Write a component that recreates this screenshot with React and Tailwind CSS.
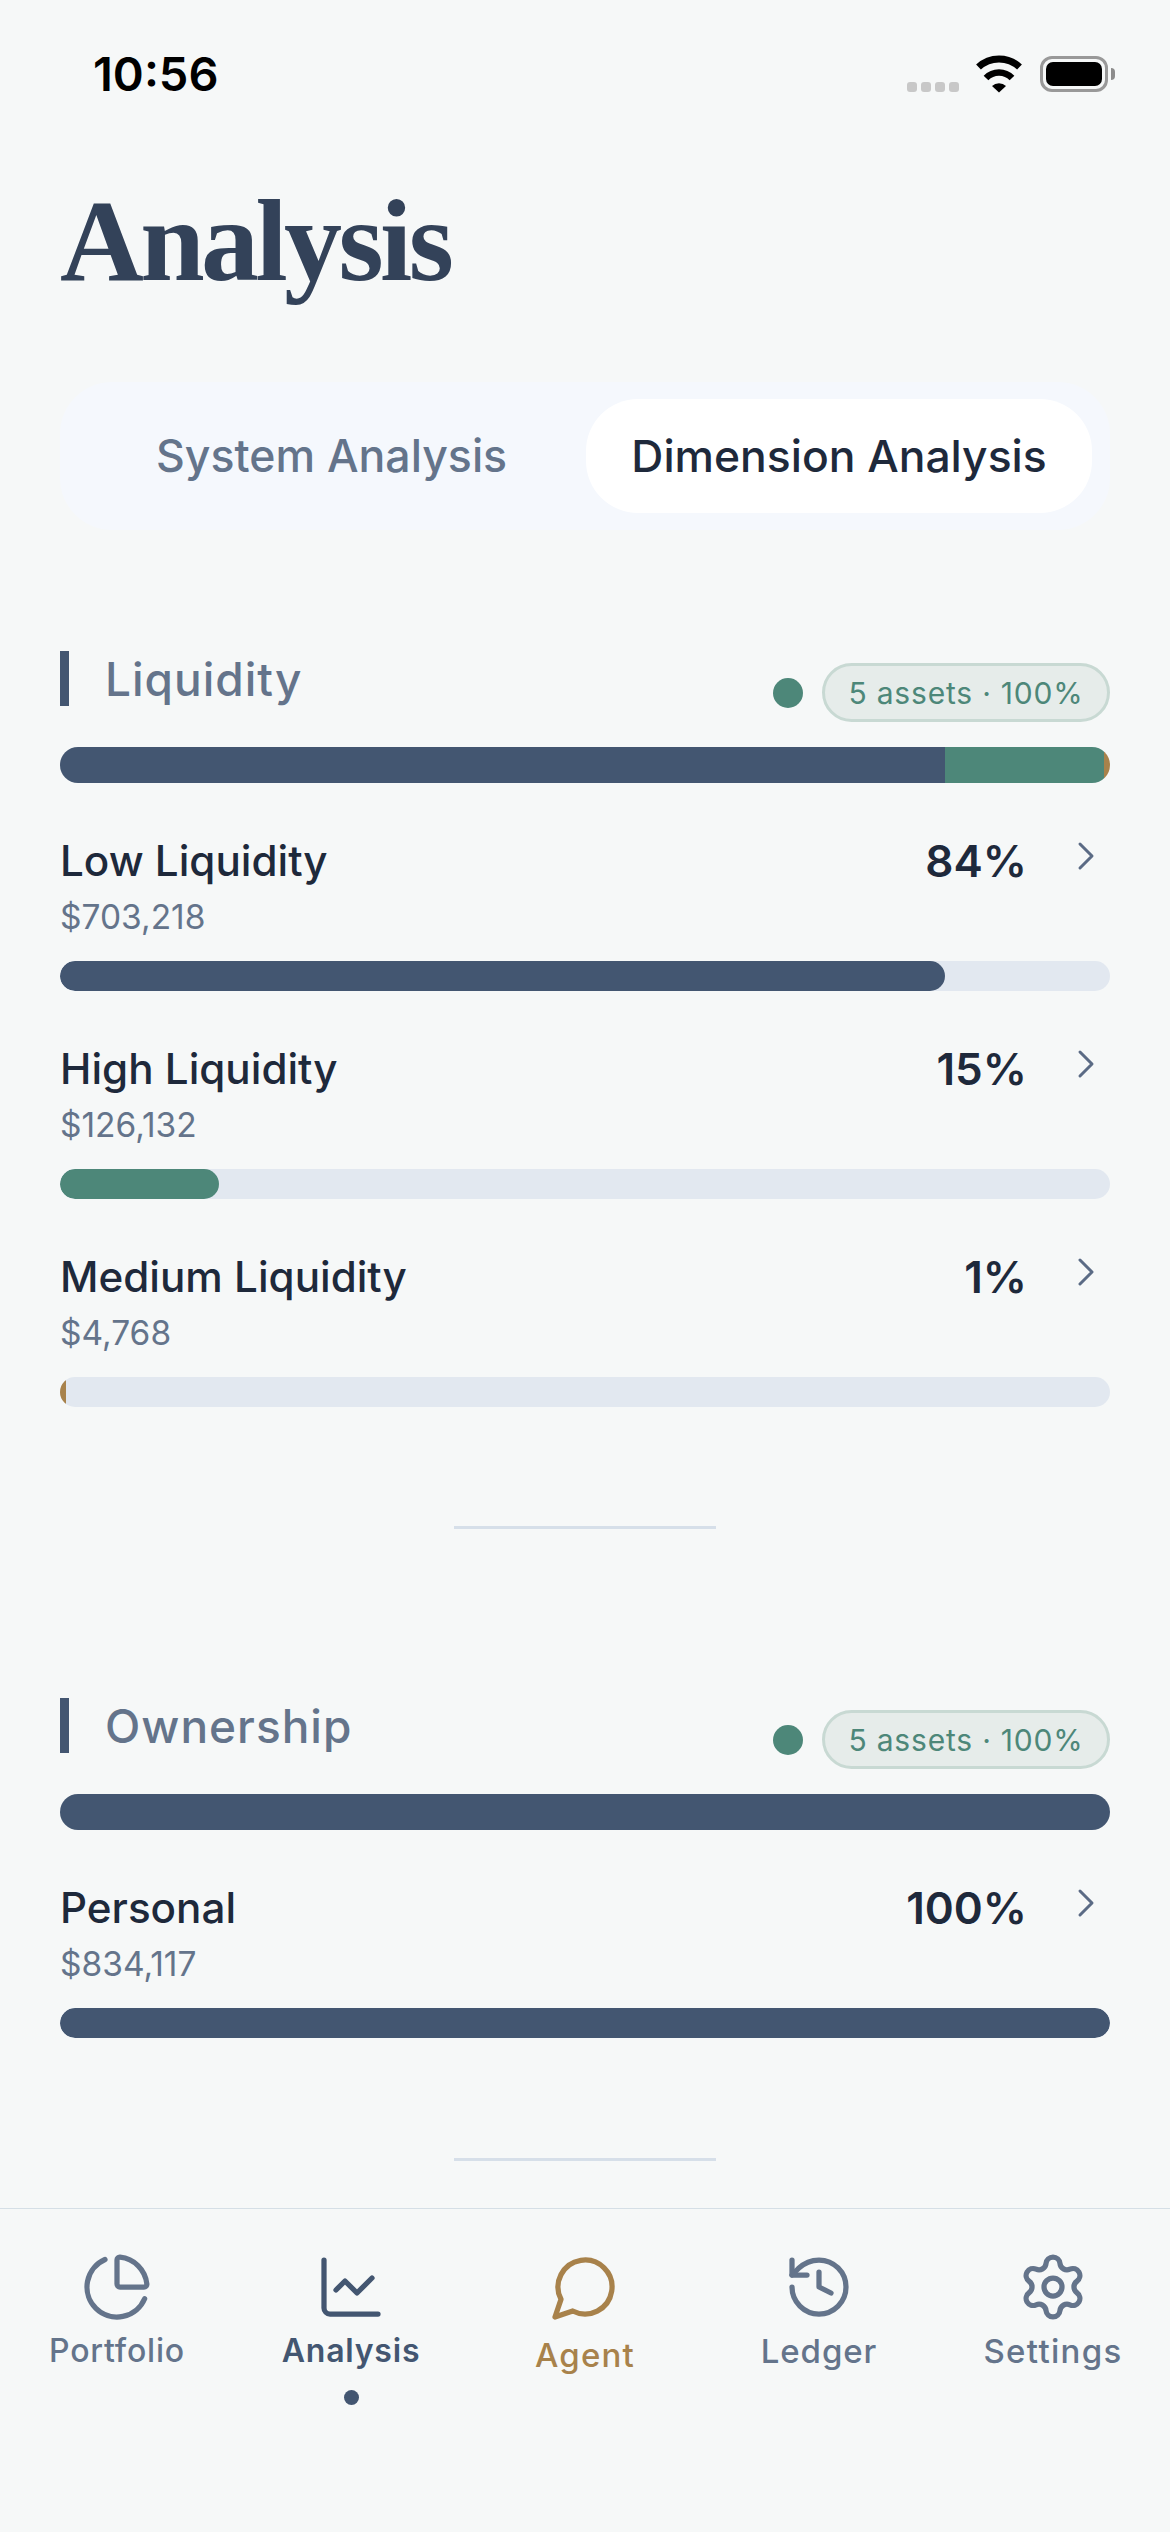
import { ChartPie, ChartLine, History, Settings, ChevronRight } from 'lucide-react';

const sections = [
  {
    title: 'Liquidity',
    stack: [
      { color: 'bg-[#435671]', width: 885 },
      { color: 'bg-[#4d8779]', width: 159 },
      { color: 'bg-[#a8824b]', width: 6 },
    ],
    rows: [
      { name: 'Low Liquidity', pct: '84%', amount: '$703,218', color: 'bg-[#435671]', width: 885, round: true },
      { name: 'High Liquidity', pct: '15%', amount: '$126,132', color: 'bg-[#4d8779]', width: 159, round: true },
      { name: 'Medium Liquidity', pct: '1%', amount: '$4,768', color: 'bg-[#a8824b]', width: 6, round: false },
    ],
    dividerTop: 'mt-[119px]',
  },
  {
    title: 'Ownership',
    stack: [{ color: 'bg-[#435671]', width: 1050 }],
    rows: [{ name: 'Personal', pct: '100%', amount: '$834,117', color: 'bg-[#435671]', width: 1050, round: true }],
    dividerTop: 'mt-[120px]',
  },
];

// lucide's current message-circle has a rounder tail than the one in the picture
const AgentIcon = ({ size, strokeWidth, className }) => (
  <svg
    width={size}
    height={size}
    viewBox="0 0 24 24"
    fill="none"
    stroke="currentColor"
    strokeWidth={strokeWidth}
    strokeLinecap="round"
    strokeLinejoin="round"
    className={className}
  >
    <path d="M7.9 20A9 9 0 1 0 4 16.1L2 22Z" />
  </svg>
);

const navItems = [
  { label: 'Portfolio', Icon: ChartPie, iconColor: 'text-[#64748b]', gap: 'mt-[6px]', text: 'text-[#64748b] text-[32px] font-medium tracking-[0.8px]' },
  { label: 'Analysis', Icon: ChartLine, iconColor: 'text-[#435671]', gap: 'mt-[6px]', text: 'text-[#435671] text-[32px] font-semibold tracking-[0.8px]', active: true },
  { label: 'Agent', Icon: AgentIcon, iconColor: 'text-[#a8824b]', gap: 'mt-[10px]', text: 'text-[#a8824b] text-[33px] font-medium tracking-[1.2px]' },
  { label: 'Ledger', Icon: History, iconColor: 'text-[#64748b]', gap: 'mt-[6px]', text: 'text-[#64748b] text-[33px] font-medium tracking-[0.9px]' },
  { label: 'Settings', Icon: Settings, iconColor: 'text-[#64748b]', gap: 'mt-[6px]', text: 'text-[#64748b] text-[33px] font-medium tracking-[1.3px]' },
];

const StatusBar = () => (
  <div className="h-[110px] relative flex justify-between">
    <span className="ml-[93px] mt-[46px] text-[47px] leading-[56px] font-semibold text-black">10:56</span>
    <div className="flex items-start mr-[55px] mt-[55px]">
      <div className="flex gap-[4px] mt-[27px] mr-[16px]">
        <span className="w-[10px] h-[10px] rounded-[3px] bg-[#c8c8c8]" />
        <span className="w-[10px] h-[10px] rounded-[3px] bg-[#c8c8c8]" />
        <span className="w-[10px] h-[10px] rounded-[3px] bg-[#c8c8c8]" />
        <span className="w-[10px] h-[10px] rounded-[3px] bg-[#c8c8c8]" />
      </div>
      <svg width="48" height="38" viewBox="0 0 48 38" fill="none">
        <path d="M3.5 12 A30 30 0 0 1 44.5 12" stroke="#000" strokeWidth="7" />
        <path d="M11 23 A18 18 0 0 1 37 23" stroke="#000" strokeWidth="6.5" />
        <path d="M17 31 A10 10 0 0 1 31 31 L24 37.5 Z" fill="#000" />
      </svg>
      <div className="ml-[17px] w-[68px] h-[36px] rounded-[12px] border-[3px] border-[#999999] p-[3px] mt-[1px]">
        <div className="w-full h-full rounded-[7px] bg-black" />
      </div>
      <div className="ml-[3px] mt-[13px] w-[4px] h-[12px] rounded-r-[4px] bg-[#8c8c8c]" />
    </div>
  </div>
);

const Tabs = () => (
  <div className="mx-[60px] h-[148px] rounded-[52px] bg-[#f5f8fd] flex items-center pr-[18px] justify-between">
    <span className="ml-[96px] text-[44.6px] font-medium text-[#64748b] leading-[56px]">System Analysis</span>
    <span className="w-[506px] h-[114px] rounded-[52px] bg-white flex items-center justify-center text-[44.4px] font-medium text-[#1e293b]">
      Dimension Analysis
    </span>
  </div>
);

const Row = ({ row }) => (
  <div className="flex flex-col">
    <div className="h-[52px] flex items-center">
      <span className="text-[42.2px] leading-[52px] font-medium text-[#1e293b]">{row.name}</span>
      <span className="ml-auto text-[44px] leading-[52px] font-semibold text-[#1e293b]">{row.pct}</span>
      <ChevronRight size={48} strokeWidth={1.5} className="ml-[35px] -mt-[10px] text-[#5b6b85]" />
    </div>
    <div className="mt-[8px] h-[44px] text-[33.5px] leading-[44px] text-[#64748b]">{row.amount}</div>
    <div className="mt-[22px] h-[30px] rounded-full bg-[#e2e8f0] overflow-hidden">
      <div className={`h-full ${row.color} ${row.round ? 'rounded-full' : ''}`} style={{ width: row.width }} />
    </div>
  </div>
);

const Section = ({ section }) => (
  <section className="px-[60px]">
    <div className="h-[72px] flex items-start">
      <div className="w-[9px] h-[55px] bg-[#435671]" />
      <h2 className="ml-[36px] text-[46px] leading-[56px] font-medium tracking-[1px] text-[#64748b]">{section.title}</h2>
      <div className="ml-auto mt-[12px] flex items-center gap-[19px]">
        <span className="w-[30px] h-[30px] rounded-full bg-[#4d8779]" />
        <span className="w-[288px] h-[59px] pt-[1px] rounded-full border-[3px] border-[#c8d9d3] bg-[#e6ecea] flex items-center justify-center text-[30px] tracking-[0.8px] text-[#4d8779]">
          5 assets · 100%
        </span>
      </div>
    </div>
    <div className="mt-[24px] h-[36px] rounded-[18px] overflow-hidden flex">
      {section.stack.map((part, i) => (
        <div key={i} className={`h-full ${part.color}`} style={{ width: part.width }} />
      ))}
    </div>
    <div className="mt-[52px] flex flex-col gap-[52px]">
      {section.rows.map((row) => (
        <Row key={row.name} row={row} />
      ))}
    </div>
    <div className={`${section.dividerTop} mx-auto w-[262px] h-[3px] bg-[#d6dfe9]`} />
  </section>
);

const BottomNav = () => (
  <nav className="h-[324px] border-t border-[#d5dfe6] pt-[42px] grid grid-cols-5 items-start">
    {navItems.map(({ label, Icon, iconColor, gap, text, active }) => (
      <div key={label} className="flex flex-col items-center">
        <Icon size={72} strokeWidth={1.75} className={iconColor} />
        <span className={`${gap} leading-[44px] ${text}`}>{label}</span>
        {active && <span className="mt-[17px] w-[15px] h-[15px] rounded-full bg-[#435671]" />}
      </div>
    ))}
  </nav>
);

export default function App() {
  return (
    <div className="w-[1170px] h-[2532px] overflow-hidden bg-[#f6f8f8] font-['Inter',sans-serif]">
      <StatusBar />
      <div className="h-[272px] pl-[60px] pt-[66px]">
        <h1 className="font-['Liberation_Serif',serif] font-bold text-[116px] leading-[130px] tracking-[-3.6px] text-[#334259]">
          Analysis
        </h1>
      </div>
      <Tabs />
      <div className="mt-[121px] flex flex-col gap-[169px]">
        {sections.map((section) => (
          <Section key={section.title} section={section} />
        ))}
      </div>
      <div className="mt-[47px]">
        <BottomNav />
      </div>
    </div>
  );
}
